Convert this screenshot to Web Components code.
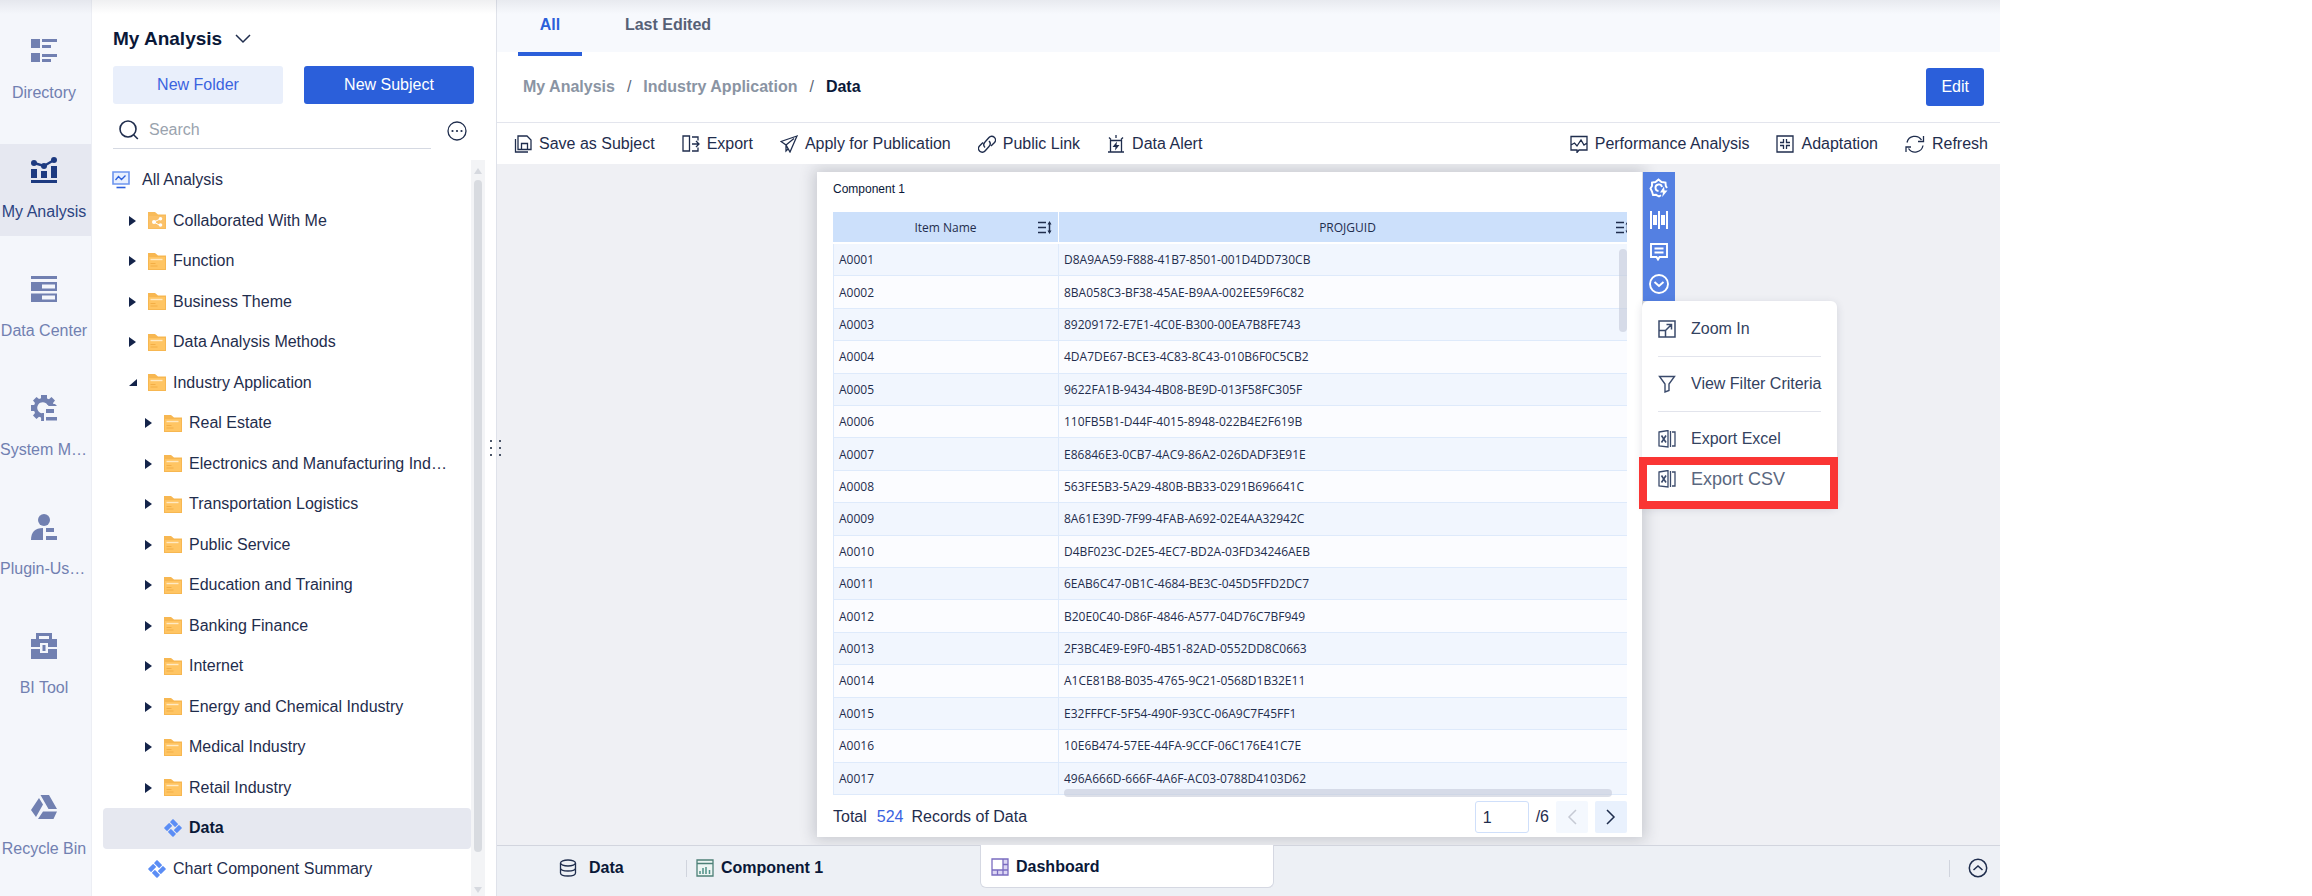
<!DOCTYPE html>
<html lang="en">
<head>
<meta charset="utf-8">
<title>My Analysis - Data</title>
<style>
html, body { margin: 0; background: #fff; }
body { font: 16px/20px "Liberation Sans", Arial, sans-serif; color: #1f2d4d; }
</style>
</head>
<body>
<bi-app></bi-app>
<script>
const ICONS = {
  directory: [26, 24, '<g fill="#7180b1"><path d="M0 0h9v9H0zM0 14h9v9H0zM11 0h15v3H11zM11 6h9v3h-9zM11 15h15v3H11zM11 20h9v3h-9z"/></g>'],
  analysis: [26, 26, '<g fill="#1d3a80"><path d="M0 23h26v3H0zM0 12h6v9H0zM10 14h6v7h-6zM20 9h6v12h-6z"/><circle cx="3" cy="6" r="3"/><circle cx="13" cy="9" r="3"/><circle cx="23" cy="3" r="3"/></g><path d="M3 6l10 3L23 3" fill="none" stroke="#1d3a80" stroke-width="2.4"/>'],
  center: [26, 26, '<g fill="#7180b1"><path d="M0 0h26v3H0z"/><path fill-rule="evenodd" d="M0 6h26v9H0zM11 8.500v4h13v-4zM0 17.500h26v8.500H0zM11 19.500v4h13v-4z"/></g>'],
  system: [26, 26, '<g fill="#7180b1"><path d="M10 0h6v3.500l2 .8L20.500 2l3.500 3.500-2 2.500.8 2H16.500A5.500 5.500 0 1 0 11 18.200V26l-1-3.500-2-.8L5.500 24 2 20.500 4 18l-.8-2H0v-6h3.200L4 8 2 5.500 5.500 2 8 4l2-.8z"/><path d="M11 18h2v8h-3zM15 14h8v4h-8zM15 22h11v3.500H15zM18 9h6l2 2h-9z"/></g>'],
  plugin: [26, 26, '<g fill="#7180b1"><circle cx="13" cy="6" r="6"/><path d="M12 14v12H0c0-8 4-12 12-12zM15 14h8v4h-8zM15 22h11v4H15z"/></g>'],
  tool: [26, 26, '<g fill="#7180b1"><path fill-rule="evenodd" d="M5 6V0h16v6h5v8h-9v-4H9v4H0V6zM8 3v3h10V3z"/><path d="M0 16h9v4h8v-4h9v10H0z"/><path d="M11.500 12h3v6h-3z"/></g>'],
  recycle: [26, 24, '<g fill="#7180b1"><path d="M9.500 0h8.500l8 14h-8.500zM8 3l4 6.500L5 22l-5-7zM12 16.500h14L22.500 24H7z"/></g>'],
  chevron: [16, 10, '<path d="M1 1l7 7 7-7" fill="none" stroke="#1f2d4d" stroke-width="1.500"/>'],
  search: [20, 20, '<g fill="none" stroke="#1f2d4d" stroke-width="1.600"><circle cx="9" cy="9" r="8"/><path d="M14.800 15l4 4"/></g>'],
  more: [20, 20, '<circle cx="10" cy="10" r="9" fill="none" stroke="#1f2d4d" stroke-width="1.300"/><g fill="#1f2d4d"><circle cx="5.500" cy="10" r="1.100"/><circle cx="10" cy="10" r="1.100"/><circle cx="14.500" cy="10" r="1.100"/></g>'],
  monitor: [18, 18, '<path d="M1 1h16v12H1z" fill="#e8f0ff" stroke="#6d95ee" stroke-width="1.600"/><path d="M3.500 9l3-3.500 3 3 4-4" fill="none" stroke="#2c5fdc" stroke-width="1.300"/><path d="M4.500 16.500h9" stroke="#2c5fdc" stroke-width="1.600"/>'],
  folder: [18, 17, '<path d="M0 0h7l3 2.500h8V17H0z" fill="#f7b751"/><path d="M1 4h16v12H1z" fill="#ffc563"/><path d="M2.500 6.500h12" stroke="#ffeac4" stroke-width="1.400"/><path d="M2.500 10.500h5M2.500 13h7" stroke="#f3ae46"/>'],
  shared: [18, 17, '<path d="M0 0h7l3 2.500h8V17H0z" fill="#f8bb5a"/><path d="M1 4h16v12H1z" fill="#fbc168"/><path d="M6 10l6-3M6 10l6 3.500" stroke="#fff"/><g fill="#fff"><circle cx="6" cy="10" r="2"/><circle cx="12.500" cy="6.800" r="1.800"/><circle cx="12.500" cy="13" r="1.800"/></g>'],
  subject: [18, 18, '<g fill="#5b8df5" transform="rotate(45 9 9)"><rect x="2.600" y="2.600" width="7.400" height="4.400" rx=".6"/><rect x="11" y="2.600" width="4.400" height="7.400" rx=".6"/><rect x="8" y="11" width="7.400" height="4.400" rx=".6"/><rect x="2.600" y="8" width="4.400" height="7.400" rx=".6"/></g>'],
  closed: [8, 10, '<path d="M0 0l7 5-7 5z" fill="#14244a"/>'],
  opened: [8, 8, '<path d="M8 0v7H0z" fill="#14244a"/>'],
  save: [18, 18, '<g fill="none" stroke="#1f2d4d" stroke-width="1.300"><path d="M4 1h9l4 4v9.500H4zM7.500 14V8.500h6V14M1.500 4v13H14"/></g>'],
  export: [18, 18, '<g fill="none" stroke="#1f2d4d" stroke-width="1.300"><path d="M7.500 1H1v15h6.500zM10 2h6v3.500M10 16h6v-3.500M10 9h7M14 6l3 3-3 3"/></g>'],
  plane: [18, 18, '<g fill="none" stroke="#1f2d4d" stroke-width="1.300"><path d="M17 1L1 6.500l5 3.500 4 7zM6 10l8-6.500M6 10v6l2.500-2.500"/></g>'],
  link: [18, 18, '<g fill="none" stroke="#1f2d4d" stroke-width="1.400"><path d="M7 12.500A4 4 0 0 1 7 7l4-4.500a3.700 3.700 0 0 1 5.500 5L13 11M11 6a4 4 0 0 1 0 5.500L7 16a3.700 3.700 0 0 1-5.500-5L5 7.500"/></g>'],
  alert: [18, 18, '<g fill="none" stroke="#1f2d4d" stroke-width="1.300"><path d="M3.500 16.500V5.500h11v11M1 17h16M9 0v3M2 2.500l2 2M16 2.500l-2 2"/></g><path d="M10 6.500L5.500 12h3L8 15.500l4.500-5.500h-3z" fill="#1f2d4d"/>'],
  perf: [18, 18, '<g fill="none" stroke="#1f2d4d" stroke-width="1.300"><path d="M1 1.500h16V15H9l-2 2.500V15H1zM1 10l3.500-2L7 11l4-6 3 5 3-2"/></g>'],
  adapt: [18, 18, '<g fill="none" stroke="#1f2d4d" stroke-width="1.300"><path d="M1 1h16v16H1zM7.500 4v3.500H4M10.500 4v3.500H14M7.500 14v-3.500H4M10.500 14v-3.500H14"/></g>'],
  refresh: [20, 18, '<g fill="none" stroke="#1f2d4d" stroke-width="1.300"><path d="M2 7.500A8 8 0 0 1 16.500 5M18 10.500A8 8 0 0 1 3.500 13.500M18.500 1v5.500H13M1 17v-5h5"/></g>'],
  sort: [14, 13, '<path d="M0 1.500h8M0 6.500h8M0 11.500h8M11.500 2v9" stroke="#1f2d4d" stroke-width="1.500"/><path d="M9.500 3.500L11.500 0l2 3.500zM9.500 9.500l2 3.500 2-3.500z" fill="#1f2d4d"/>'],
  gear: [20, 20, '<g fill="none" stroke="#fff" stroke-width="1.900"><path d="M12 17.200L10 18.500l-3-1.700-3 .2-1-3.500L1.500 10.500 3 8V4.500L6.500 4l3-2.500 3 2.500 4 .5.300 3.500 1.200 2"/><path d="M13 9a3.300 3.300 0 1 0-3.500 4"/></g><path d="M15 8.500l-4 6h3l-.8 4.500 5.300-6.500h-3z" fill="#fff"/>'],
  bars: [20, 18, '<g fill="#fff"><path d="M1 0h2v18H1zM9 0h2v18H9zM17 0h2v18h-2zM4 4h4v10H4zM12 4h4v10h-4z"/></g>'],
  comment: [18, 18, '<g fill="none" stroke="#fff" stroke-width="1.900"><path d="M1 1h16v13H9.500L8 16.500 6.500 14H1zM4.500 5.500h9M4.500 9.500h9"/></g>'],
  expand: [20, 20, '<g fill="none" stroke="#fff" stroke-width="1.900"><circle cx="10" cy="10" r="9"/><path d="M5.500 8l4.500 4 4.500-4"/></g>'],
  zoomin: [18, 18, '<g fill="none" stroke="#3a4a6b" stroke-width="1.500"><path d="M1 1h16v16H1zM1 10.500h6.500V17M7 11l6.500-6.500M8.500 4.500h5v5"/></g>'],
  filter: [18, 18, '<path d="M1.500 1.500h15L11 9v6.500L7 17V9z" fill="none" stroke="#3a4a6b" stroke-width="1.400"/>'],
  excel: [18, 18, '<g fill="none" stroke="#3a4a6b" stroke-width="1.300"><path d="M1 2l9-1.500v16.500L1 16zM12.500 1v16M14 2h3v14h-3"/></g><path d="M3.500 5.500L8 12.500M8 5.500L3.500 12.500" stroke="#3a4a6b" stroke-width="1.600"/>'],
  prev: [10, 16, '<path d="M9 1L2 8l7 7" fill="none" stroke="#c6cad4" stroke-width="1.500"/>'],
  next: [10, 16, '<path d="M1 1l7 7-7 7" fill="none" stroke="#1f2d4d" stroke-width="1.500"/>'],
  database: [18, 18, '<g fill="none" stroke="#1f2d4d" stroke-width="1.300"><ellipse cx="9" cy="4" rx="7.500" ry="3"/><path d="M1.500 4v10c0 4 15 4 15 0V4M1.500 9c0 4 15 4 15 0"/></g>'],
  chart: [18, 18, '<path d="M1 1h16v16H1zM1 4.500h16" fill="#edf5f3" stroke="#4d8077" stroke-width="1.300"/><path d="M4 15v-3M7 15V9M10 15V8M13.500 15v-4" stroke="#4d9087" stroke-width="1.500"/>'],
  board: [18, 18, '<path d="M1 1h16v16H1z" fill="#dcd6f4"/><path d="M1 1h11v11H1z" fill="#fff"/><path d="M1 1h16v16H1zM12 1v16M1 12h16M12 6.500h5M6.500 12v5" fill="none" stroke="#7a6cc0" stroke-width="1.300"/>'],
  up: [20, 20, '<g fill="none" stroke="#1f2d4d" stroke-width="1.500"><circle cx="10" cy="10" r="8.700"/><path d="M5.500 12l4.500-4 4.500 4"/></g>']
};

function define(name, markup) {
  customElements.define(name, class extends HTMLElement {
    constructor() {
      super();
      this.attachShadow({ mode: 'open' });
    }
    connectedCallback() {
      if (this.shadowRoot.childNodes.length) return;
      const t = document.createElement('template');
      t.innerHTML = typeof markup === 'function' ? markup(this) : markup;
      this.shadowRoot.append(t.content.cloneNode(true));
    }
  });
}

define('bi-icon', el => {
  const [w, h, body] = ICONS[el.getAttribute('name')];
  return `<style>:host{display:block;flex:none;line-height:0}svg{display:block}</style>
  <svg width="${w}" height="${h}" viewBox="0 0 ${w} ${h}" aria-hidden="true">${body}</svg>`;
});

define('rail-item', el => `<style>
  :host{display:block}
  a{display:flex;flex-direction:column;align-items:center;height:92px;box-sizing:border-box;padding-top:13px;gap:19px;color:#7180b1;text-decoration:none}
  .pic{display:flex;align-items:center;height:26px;margin-right:3px}
  .label{width:100%;padding-right:3px;box-sizing:border-box;text-align:center;white-space:nowrap}
  :host([long]) .label{text-align:left}
  :host([selected]) a{background:#e6e8f1;color:#2c4482}
  </style><a href="#"><span class="pic"><bi-icon name="${el.getAttribute('icon')}"></bi-icon></span><span class="label"><slot></slot></span></a>`);

define('nav-rail', `<style>
  :host{display:block;background:#f4f6fb;border-right:1px solid #eceef4;min-width:0}
  nav{display:flex;flex-direction:column;gap:27px;height:100%;box-sizing:border-box;padding:25px 0 23px}
  rail-item:last-child{margin-top:auto}
  </style><nav aria-label="Main">
  <rail-item icon="directory">Directory</rail-item>
  <rail-item icon="analysis" selected>My Analysis</rail-item>
  <rail-item icon="center">Data Center</rail-item>
  <rail-item icon="system" long>System M…</rail-item>
  <rail-item icon="plugin" long>Plugin-Us…</rail-item>
  <rail-item icon="tool">BI Tool</rail-item>
  <rail-item icon="recycle">Recycle Bin</rail-item></nav>`);

define('bi-button', `<style>
  :host{display:block}
  button{width:100%;height:38px;border:0;border-radius:3px;padding:0 15px 1px;background:#2b5fda;color:#fff;font:inherit;cursor:pointer}
  :host([soft]) button{background:#e9effb;color:#3a63df}
  </style><button type="button"><slot></slot></button>`);

define('tree-node', el => `<style>
  :host{display:grid;min-height:0}
  a{display:flex;align-items:center;color:inherit;text-decoration:none;border-radius:4px;padding-left:calc(26px + 16px * var(--depth,0));white-space:nowrap;min-height:0}
  :host([level="0"]) a{padding-left:9px}
  :host([level="2"]){--depth:1}
  .arrow{width:19px;flex:none}
  .pic{width:25px;flex:none}
  :host([level="0"]) .pic{width:30px}
  :host([selected]) a{background:#e6e8f0;color:#0a1838;font-weight:bold}
  </style><a href="#">${el.getAttribute('level') === '0' ? '' : `<span class="arrow">${el.hasAttribute('arrow') ? `<bi-icon name="${el.getAttribute('arrow')}"></bi-icon>` : ''}</span>`}<span class="pic"><bi-icon name="${el.getAttribute('icon')}"></bi-icon></span><slot></slot></a>`);

define('side-panel', () => {
  const node = (text, level, icon = 'folder', arrow = 'closed', extra = '') =>
    `<tree-node level="${level}" icon="${icon}" ${arrow ? `arrow="${arrow}"` : ''} ${extra}>${text}</tree-node>`;
  return `<style>
  :host{display:flex;flex-direction:column;background:#fff;border-right:1px solid #dfe2ea;position:relative;min-height:0}
  h1{margin:0;padding:27px 21px 0;font-size:19px;line-height:24px;color:#0a1838;display:flex;align-items:center;gap:13px}
  .actions{display:grid;grid-template-columns:1fr 1fr;gap:21px;padding:15px 22px 0 21px}
  .find{display:flex;align-items:center;justify-content:space-between;padding:8px 29px 0 21px;gap:16px}
  label{flex:1;display:flex;align-items:center;gap:10px;height:36px;padding-left:6px;border-bottom:1px solid #d5d9e2}
  input{flex:1;min-width:0;border:0;outline:0;padding:0;background:none;font:inherit;color:inherit}
  input::placeholder{color:#9aa3ae}
  .body{flex:1;display:grid;grid-template-columns:1fr 14px;padding:11px 11px 0;min-height:0}
  .tree{display:grid;grid-auto-rows:1fr;padding-bottom:7px;min-height:0}
  .bar{background:#f3f4f6;display:flex;flex-direction:column;align-items:center;gap:6px;padding:8px 0 3px}
  .bar i{border:4px solid transparent;border-top-width:0;border-bottom:6px solid #d6d9df}
  .bar i:last-child{border-bottom-width:0;border-top:6px solid #d6d9df}
  .bar b{flex:1;width:8px;border-radius:4px;background:#d8dbe0;margin-bottom:29px}
  .grip{position:absolute;right:-5px;top:50%;transform:translateY(-8px);display:grid;grid-template-columns:2px 2px;gap:5px 7px;z-index:2}
  .grip i{width:2px;height:2px;background:#4a5568}
  </style>
  <h1>My Analysis <bi-icon name="chevron"></bi-icon></h1>
  <div class="actions"><bi-button soft>New Folder</bi-button><bi-button>New Subject</bi-button></div>
  <div class="find"><label><bi-icon name="search"></bi-icon><input type="text" placeholder="Search" aria-label="Search"></label><bi-icon name="more"></bi-icon></div>
  <div class="body"><div class="tree">
  ${node('All Analysis', 0, 'monitor', '')}
  ${node('Collaborated With Me', 1, 'shared')}
  ${node('Function', 1)}${node('Business Theme', 1)}${node('Data Analysis Methods', 1)}
  ${node('Industry Application', 1, 'folder', 'opened')}
  ${['Real Estate', 'Electronics and Manufacturing Ind…', 'Transportation Logistics', 'Public Service', 'Education and Training', 'Banking Finance', 'Internet', 'Energy and Chemical Industry', 'Medical Industry', 'Retail Industry'].map(t => node(t, 2)).join('')}
  ${node('Data', 2, 'subject', '', 'selected')}
  ${node('Chart Component Summary', 1, 'subject', '')}
  </div><div class="bar"><i></i><b></b><i></i></div></div>
  <div class="grip"><i></i><i></i><i></i><i></i><i></i><i></i></div>`;
});

define('view-tabs', `<style>
  :host{display:flex;background:#f7f9fd;height:52px;padding-left:21px;gap:24px}
  a{position:relative;width:64px;box-sizing:border-box;text-align:center;line-height:50px;font-weight:bold;color:#566076;text-decoration:none;white-space:nowrap}
  a:last-child{width:124px}
  a.on{color:#2b5fda}
  a.on::after{content:"";position:absolute;left:0;right:0;top:52px;height:4px;background:#2b5fda}
  </style><a class="on" href="#">All</a><a href="#">Last Edited</a>`);

define('crumb-bar', `<style>
  :host{display:flex;align-items:center;justify-content:space-between;height:70px;padding:0 16px 0 26px;border-bottom:1px solid #e3e5ed}
  nav{display:flex;gap:12px;color:#8a94a3;font-weight:bold}
  nav i{font-style:normal;font-weight:normal;color:#5c6778}
  a{color:inherit;text-decoration:none}
  b{color:#0a1838}
  </style><nav aria-label="Breadcrumb"><a href="#">My Analysis</a><i>/</i><a href="#">Industry Application</a><i>/</i><b>Data</b></nav><bi-button>Edit</bi-button>`);

define('tool-item', el => `<style>
  :host{display:block}
  button{display:flex;align-items:center;gap:7px;border:0;padding:0;background:none;font:inherit;color:inherit;white-space:nowrap}
  </style><button type="button"><bi-icon name="${el.getAttribute('icon')}"></bi-icon><slot></slot></button>`);

define('tool-bar', `<style>
  :host{display:flex;align-items:center;justify-content:space-between;height:41px;padding:0 12px 0 17px;background:#fff}
  div{display:flex;gap:27px}
  </style><div><tool-item icon="save">Save as Subject</tool-item><tool-item icon="export">Export</tool-item><tool-item icon="plane">Apply for Publication</tool-item><tool-item icon="link">Public Link</tool-item><tool-item icon="alert">Data Alert</tool-item></div>
  <div><tool-item icon="perf">Performance Analysis</tool-item><tool-item icon="adapt">Adaptation</tool-item><tool-item icon="refresh">Refresh</tool-item></div>`);

const GUIDS = ['D8A9AA59-F888-41B7-8501-001D4DD730CB', '8BA058C3-BF38-45AE-B9AA-002EE59F6C82', '89209172-E7E1-4C0E-B300-00EA7B8FE743', '4DA7DE67-BCE3-4C83-8C43-010B6F0C5CB2', '9622FA1B-9434-4B08-BE9D-013F58FC305F', '110FB5B1-D44F-4015-8948-022B4E2F619B', 'E86846E3-0CB7-4AC9-86A2-026DADF3E91E', '563FE5B3-5A29-480B-BB33-0291B696641C', '8A61E39D-7F99-4FAB-A692-02E4AA32942C', 'D4BF023C-D2E5-4EC7-BD2A-03FD34246AEB', '6EAB6C47-0B1C-4684-BE3C-045D5FFD2DC7', 'B20E0C40-D86F-4846-A577-04D76C7BF949', '2F3BC4E9-E9F0-4B51-82AD-0552DD8C0663', 'A1CE81B8-B035-4765-9C21-0568D1B32E11', 'E32FFFCF-5F54-490F-93CC-06A9C7F45FF1', '10E6B474-57EE-44FA-9CCF-06C176E41C7E', '496A666D-666F-4A6F-AC03-0788D4103D62'];

define('data-grid', () => `<style>
  :host{display:block;position:relative;overflow:hidden;min-height:0;font:12px/16px "Open Sans","Noto Sans",sans-serif}
  table{width:calc(100% + 9px);height:calc(100% - 2px);border-spacing:0;table-layout:fixed}
  col:first-child{width:225px}
  th{position:relative;height:32px;padding:2px 0 0;background:#cce0fb;font-weight:normal;border-bottom:2px solid #fff;box-sizing:border-box}
  th+th{border-left:1px solid #fff}
  th bi-icon{position:absolute;right:6px;top:9px}
  td{padding:1px 5px 0;background:#f1f6fe;border-left:1px solid #deeafb;border-bottom:1px solid #deeafb}
  tbody tr:nth-child(even) td{background:#fbfcff}
  .v,.h{position:absolute;background:#c4cad9;opacity:.6;border-radius:4px}
  .v{right:0;top:37px;width:8px;height:83px}
  .h{left:231px;right:15px;bottom:0;height:8px}
  </style><table><colgroup><col><col></colgroup><thead><tr><th>Item Name<bi-icon name="sort"></bi-icon></th><th>PROJGUID<bi-icon name="sort"></bi-icon></th></tr></thead>
  <tbody>${GUIDS.map((g, i) => `<tr><td>A${String(i + 1).padStart(4, '0')}</td><td>${g}</td></tr>`).join('')}</tbody></table><div class="v"></div><div class="h"></div>`);

define('page-nav', `<style>
  :host{display:flex;align-items:center;justify-content:space-between;height:40px}
  .sum{display:flex;gap:8px}
  .sum b{font-weight:normal;color:#3a63df;margin-left:2px}
  .pages{display:flex;align-items:center;gap:7px}
  input{width:54px;height:32px;box-sizing:border-box;border:1px solid #cfdffa;border-radius:3px;padding:2px 7px 0;font:inherit;color:inherit;background:#fff}
  button{display:flex;align-items:center;justify-content:center;width:32px;height:32px;border:0;border-radius:2px;background:#e9f1fd;padding:0}
  button:disabled{background:#f4f8fe}
  </style><div class="sum"><span>Total</span><b>524</b><span>Records of Data</span></div>
  <div class="pages"><input type="text" value="1" aria-label="Page"><span>/6</span><button type="button" disabled aria-label="Previous page"><bi-icon name="prev"></bi-icon></button><button type="button" aria-label="Next page"><bi-icon name="next"></bi-icon></button></div>`);

define('widget-tools', `<style>
  :host{display:flex;flex-direction:column;width:32px;background:#5480e2}
  button{display:flex;align-items:center;justify-content:center;height:32px;padding:0;border:0;background:none}
  </style><button type="button" aria-label="Settings"><bi-icon name="gear"></bi-icon></button><button type="button" aria-label="Layout"><bi-icon name="bars"></bi-icon></button><button type="button" aria-label="Comment"><bi-icon name="comment"></bi-icon></button><button type="button" aria-label="More"><bi-icon name="expand"></bi-icon></button>`);

define('menu-item', el => `<style>
  :host{display:block}
  button{display:flex;align-items:center;gap:15px;width:100%;height:40px;border:0;padding:0 0 0 16px;background:none;font:inherit;color:#33425f;white-space:nowrap}
  :host([marked]){position:relative;font-size:18px}
  :host([marked]) button{color:#5a6880}
  :host([marked])::after{content:"";position:absolute;left:-3px;right:-1px;top:-2px;height:36px;border:8px solid #fa3534}
  </style><button type="button"><bi-icon name="${el.getAttribute('icon')}"></bi-icon><slot></slot></button>`);

define('more-menu', `<style>
  :host{display:block;width:195px;box-sizing:border-box;padding:8px 0 8px;border-radius:6px;background:#fff;box-shadow:0 2px 8px rgba(40,50,80,.14)}
  hr{border:0;border-top:1px solid #e2e4ec;margin:7px 16px}
  </style><menu-item icon="zoomin">Zoom In</menu-item><hr><menu-item icon="filter">View Filter Criteria</menu-item><hr><menu-item icon="excel">Export Excel</menu-item><menu-item icon="excel" marked>Export CSV</menu-item>`);

define('widget-card', `<style>
  :host{position:relative;flex:1;display:grid;grid-template-rows:40px 1fr auto;background:#fff;padding:0 15px 0 16px;box-shadow:0 0 14px 3px rgba(40,45,60,.2);min-width:0;min-height:0}
  h2{margin:0;font:12px/34px "Liberation Sans",Arial,sans-serif;color:#0a1838}
  .side{position:absolute;left:100%;top:0}
  widget-tools{padding-bottom:1px;margin-left:1px}
  </style><h2>Component 1</h2><data-grid></data-grid><page-nav></page-nav><div class="side"><widget-tools></widget-tools><more-menu></more-menu></div>`);

define('sheet-tab', el => `<style>
  :host{display:flex;align-items:center}
  a{display:flex;align-items:center;gap:7px;color:#0a1838;text-decoration:none;font-weight:bold;white-space:nowrap}
  :host([wide]) a{gap:12px}
  :host([current]){align-self:flex-start;box-sizing:border-box;width:294px;height:44px;margin-top:-1px;padding-left:10px;background:#fff;border:1px solid #d5d8e2;border-top:0;border-radius:0 0 6px 6px}
  :host([current]) a{margin-top:2px}
  </style><a href="#"><bi-icon name="${el.getAttribute('icon')}"></bi-icon><slot></slot></a>`);

define('sheet-bar', `<style>
  :host{display:flex;height:50px;background:#edf0f5;border-top:1px solid #d2d5de;position:relative}
  sheet-tab,i,button{height:43px}
  .data{width:127px;padding-left:62px}
  .comp{width:284px;padding-left:9px}
  i{align-self:flex-start;width:1px;height:17px;margin-top:14px;background:#d0d4dd}
  .last{margin-left:auto}
  button{display:flex;align-items:center;border:0;background:none;padding:0 12px 0 18px}
  </style><sheet-tab class="data" icon="database" wide>Data</sheet-tab><i></i><sheet-tab class="comp" icon="chart">Component 1</sheet-tab><sheet-tab icon="board" current>Dashboard</sheet-tab><i class="last"></i><button type="button" aria-label="Expand"><bi-icon name="up"></bi-icon></button>`);

define('bi-app', `<style>
  :host{position:relative;display:grid;grid-template-columns:92px 405px minmax(0,1fr);grid-template-rows:minmax(0,1fr);height:100vh;margin-right:312px}
  :host::before{content:"";position:absolute;z-index:3;left:0;right:0;top:0;height:14px;background:linear-gradient(rgba(30,35,60,.07),transparent)}
  main{display:flex;flex-direction:column;min-width:0;min-height:0}
  .canvas{flex:1;display:flex;min-height:0;background:#eff0f4;padding:8px 358px 8px 320px;overflow:hidden}
  </style><nav-rail></nav-rail><side-panel></side-panel><main><view-tabs></view-tabs><crumb-bar></crumb-bar><tool-bar></tool-bar><section class="canvas"><widget-card></widget-card></section><sheet-bar></sheet-bar></main>`);
</script>
</body>
</html>
